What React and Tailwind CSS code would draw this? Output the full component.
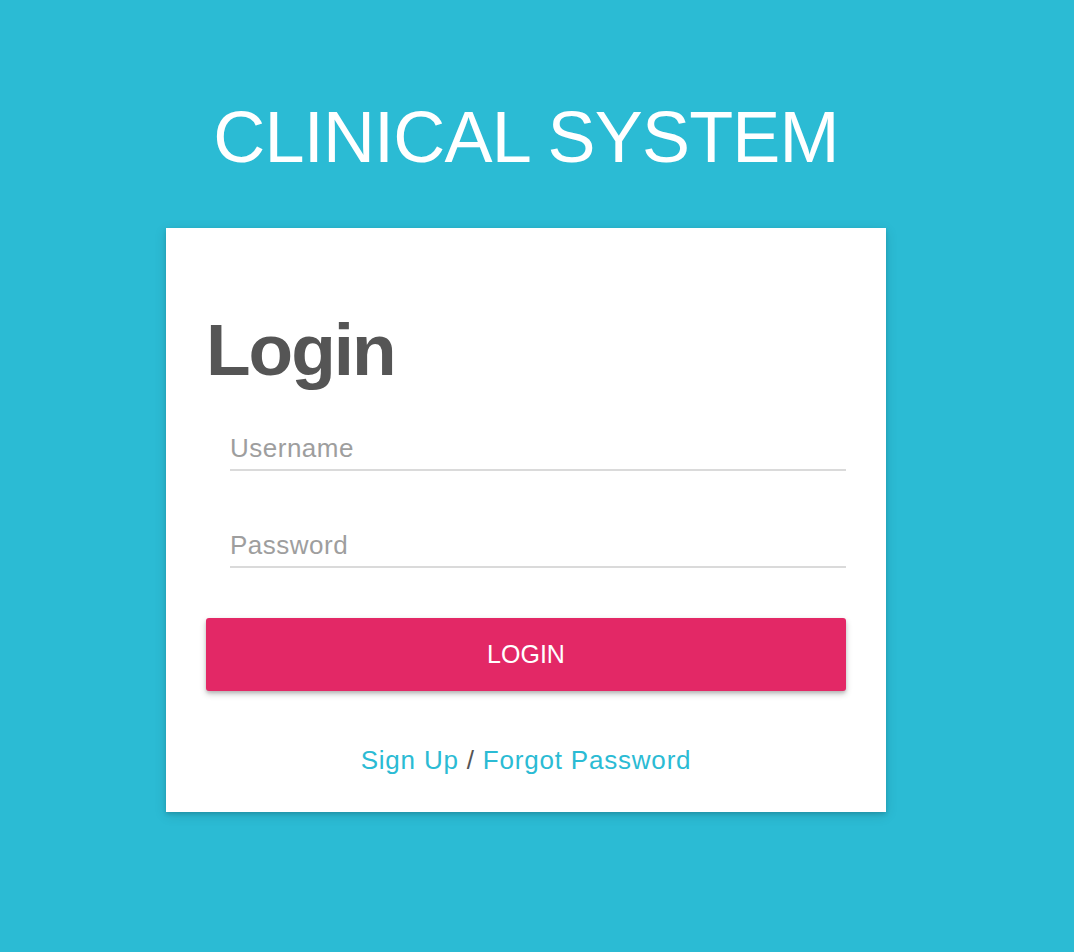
export default function App() {
  const font = { fontFamily: '"Liberation Sans", Arial, Helvetica, sans-serif' };
  return (
    <div className="min-h-screen w-full bg-[#2bbbd4]" style={font}>
      <div className="w-[1052px] flex flex-col items-center pt-[101px]">
        <h1 className="text-[72px] leading-none text-white font-normal tracking-[-0.8px]">
          CLINICAL SYSTEM
        </h1>
        <div className="mt-[55px] w-[720px] bg-white shadow-[0_2px_4px_rgba(0,0,0,0.14),0_3px_12px_rgba(0,0,0,0.12)] px-[40px] pt-[85px] pb-[39px] flex flex-col">
          <h2 className="text-[73px] leading-none font-bold text-[#555555] tracking-[-2px]">
            Login
          </h2>
          <div className="pl-[24px] mt-[41px] flex flex-col">
            <input
              type="text"
              placeholder="Username"
              className="h-[44px] w-full border-b-2 border-[#dadada] bg-transparent text-[26px] tracking-[0.5px] text-[#555] placeholder:text-[#9e9e9e] outline-none p-0"
            />
            <input
              type="password"
              placeholder="Password"
              className="mt-[53px] h-[44px] w-full border-b-2 border-[#dadada] bg-transparent text-[26px] tracking-[0.5px] text-[#555] placeholder:text-[#9e9e9e] outline-none p-0"
            />
          </div>
          <button className="mt-[50px] h-[73px] w-full rounded-[3px] bg-[#e32866] text-white text-[25px] leading-none flex items-center justify-center shadow-[0_3px_6px_rgba(0,0,0,0.22),0_2px_3px_rgba(0,0,0,0.12)]">
            LOGIN
          </button>
          <div className="mt-[56px] text-center text-[26px] leading-none tracking-[0.8px] text-[#555]">
            <a href="#" className="text-[#2bbbd4]">Sign Up</a>
            {" / "}
            <a href="#" className="text-[#2bbbd4]">Forgot Password</a>
          </div>
        </div>
      </div>
    </div>
  );
}
